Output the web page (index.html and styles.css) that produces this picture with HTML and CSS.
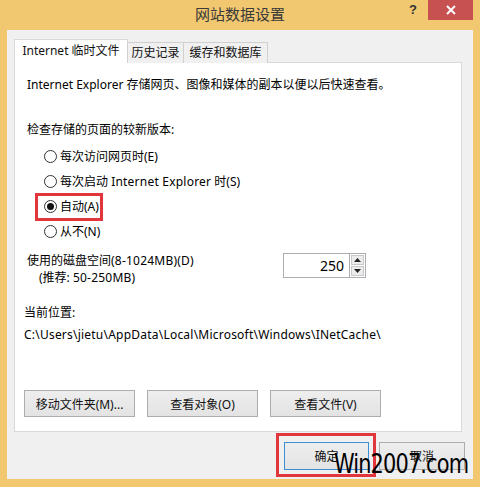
FILE: index.html
```html
<!DOCTYPE html>
<html lang="zh-CN">
<head>
<meta charset="utf-8">
<title>网站数据设置</title>
<link rel="stylesheet" href="styles.css">
</head>
<body>
<div class="window">
  <div class="titlebar">
    <div class="title-spacer"></div>
    <div class="title">网站数据设置</div>
    <div class="controls">
      <span class="help">?</span>
      <span class="close">
        <svg width="12" height="12" viewBox="0 0 12 12"><path d="M2 2 L10 10 M10 2 L2 10" stroke="#fff" stroke-width="2"/></svg>
      </span>
    </div>
  </div>
  <div class="client">
    <div class="tabs">
      <div class="tab active">Internet 临时文件</div>
      <div class="tab">历史记录</div>
      <div class="tab">缓存和数据库</div>
    </div>
    <div class="panel">
      <p class="intro">Internet Explorer 存储网页、图像和媒体的副本以便以后快速查看。</p>
      <p class="label">检查存储的页面的较新版本:</p>
      <div class="radios">
        <div class="radio-row"><span class="radio"></span><span>每次访问网页时(E)</span></div>
        <div class="radio-row"><span class="radio"></span><span>每次启动 <span class="latin">Internet Explorer</span> 时(S)</span></div>
        <div class="radio-row highlighted"><span class="radio checked"></span><span>自动(A)</span><span class="mark mark-auto"></span></div>
        <div class="radio-row"><span class="radio"></span><span>从不(N)</span></div>
      </div>
      <div class="disk">
        <div class="disk-text">
          <div>使用的磁盘空间<span class="latin">(8-1024MB)(D)</span></div>
          <div class="sub">(推荐: <span class="latin">50-250MB)</span></div>
        </div>
        <div class="spin">
          <div class="spin-field">250</div>
          <div class="spin-btns">
            <div class="spin-btn"><svg width="7" height="4" viewBox="0 0 7 4"><path d="M0 4 L3.5 0 L7 4 Z" fill="#222"/></svg></div>
            <div class="spin-btn"><svg width="7" height="4" viewBox="0 0 7 4"><path d="M0 0 L3.5 4 L7 0 Z" fill="#222"/></svg></div>
          </div>
        </div>
      </div>
      <p class="loc-label">当前位置:</p>
      <p class="path latin">C:\Users\jietu\AppData\Local\Microsoft\Windows\INetCache\</p>
      <div class="panel-buttons">
        <button class="btn wide">移动文件夹(M)...</button>
        <button class="btn wide">查看对象(O)</button>
        <button class="btn wide">查看文件(V)</button>
      </div>
    </div>
    <div class="footer">
      <button class="btn dlg default">确定<span class="mark mark-ok"></span></button>
      <button class="btn dlg">取消</button>
    </div>
  </div>
  <div class="watermark">Win2007.com</div>
</div>
</body>
</html>
```

FILE: styles.css
```css
* { box-sizing: border-box; }
html, body { margin: 0; padding: 0; }
body {
  width: 480px;
  height: 487px;
  overflow: hidden;
  font-family: "Noto Sans", "Noto Sans CJK SC", sans-serif;
  font-size: 12px;
  color: #000;
}
p { margin: 0; }
.latin { letter-spacing: 0.22px; }

.window {
  position: relative;
  width: 480px;
  height: 487px;
  background: #f1c86f;
  display: flex;
  flex-direction: column;
}

.titlebar {
  height: 30px;
  display: grid;
  grid-template-columns: 1fr auto 1fr;
  align-items: start;
}
.title {
  font-family: "Noto Sans CJK SC", sans-serif;
  font-size: 15px;
  line-height: 28px;
  color: #3a3a3a;
}
.controls {
  justify-self: end;
  display: flex;
  align-items: flex-start;
  margin-right: 7px;
}
.help {
  font-family: "Liberation Sans", sans-serif;
  font-weight: bold;
  font-size: 13px;
  line-height: 20px;
  color: #333;
  width: 30px;
  text-align: center;
}
.close {
  width: 45px;
  height: 20px;
  background: #c75050;
  display: flex;
  align-items: center;
  justify-content: center;
}

.client {
  flex: 1;
  margin: 0 7px 8px 7px;
  background: #f0f0f0;
  padding: 9px 11px 0 7px;
  display: flex;
  flex-direction: column;
}

.tabs {
  display: flex;
  align-items: flex-end;
  height: 24px;
  position: relative;
  z-index: 1;
}
.tab {
  height: 21px;
  line-height: 19px;
  border: 1px solid #d0d0d0;
  border-bottom: none;
  background: #f0f0f0;
  color: #111;
  margin-left: -1px;
  white-space: nowrap;
  text-align: center;
}
.tab:first-child { margin-left: 0; }
.tab.active {
  height: 24px;
  line-height: 22px;
  background: #fff;
  width: 114px;
  border-color: #d9d9d9;
}
.tab:nth-child(2) { width: 57px; }
.tab:nth-child(3) { width: 85px; }

.panel {
  background: #fff;
  border: 1px solid #d9d9d9;
  margin-top: -1px;
  padding: 14px 12px 14px 12px;
  line-height: 16px;
}
.label { margin-top: 29px; }

.radios { margin-top: 6px; padding-left: 17px; }
.radio-row {
  position: relative;
  height: 25px;
  display: flex;
  align-items: center;
  gap: 3px;
}
.radio {
  width: 13px;
  height: 13px;
  border: 1px solid #333;
  border-radius: 50%;
  background: #fff;
  display: flex;
  align-items: center;
  justify-content: center;
}
.radio.checked::after {
  content: "";
  width: 7px;
  height: 7px;
  border-radius: 50%;
  background: #111;
}

.mark {
  position: absolute;
  border: 3px solid #e0363c;
  pointer-events: none;
}
.mark-auto {
  left: -9px;
  top: -1px;
  width: 68px;
  height: 28px;
}

.disk {
  display: flex;
  justify-content: space-between;
  margin-top: 8px;
  padding-right: 83px;
  line-height: 17px;
}
.disk-text .sub { padding-left: 12px; }
.spin {
  display: flex;
  margin-top: 1px;
}
.spin-field {
  width: 67px;
  height: 25px;
  border: 1px solid #abadb3;
  text-align: right;
  padding-right: 5px;
  line-height: 23px;
  font-size: 14px;
}
.spin-btns {
  display: flex;
  flex-direction: column;
  width: 16px;
  height: 25px;
  border: 1px solid #abadb3;
  border-left: none;
  padding: 1px;
  gap: 1px;
}
.spin-btn {
  flex: 1;
  background: #ececec;
  border: 1px solid #c8c8c8;
  display: flex;
  align-items: center;
  justify-content: center;
}

.loc-label { margin-top: 19px; margin-left: -3px; }
.path { margin-top: 6px; margin-left: -3px; }

.panel-buttons {
  display: flex;
  gap: 12px;
  margin-top: 47px;
  margin-left: -3px;
}

.btn {
  font-family: "Noto Sans", "Noto Sans CJK SC", sans-serif;
  font-size: 12px;
  color: #111;
  background: linear-gradient(#eeeeee, #e3e3e3);
  border: 1px solid #adadad;
  padding: 0;
  margin: 0;
  position: relative;
}
.btn.wide { width: 111px; height: 27px; }

.footer {
  display: flex;
  justify-content: flex-end;
  gap: 10px;
  margin-top: 10px;
  margin-right: -3px;
}
.btn.dlg { width: 86px; height: 28px; }
.btn.default { border-color: #3c8fd6; width: 85px; }
.mark-ok {
  left: -9px;
  top: -10px;
  width: 100px;
  height: 44px;
}

.watermark {
  position: absolute;
  left: 334px;
  top: 448px;
  font-family: "DejaVu Sans Condensed", "DejaVu Sans", sans-serif;
  font-size: 27px;
  line-height: 32px;
  color: #000;
  letter-spacing: -1px;
  white-space: nowrap;
  transform: scaleX(0.86);
  transform-origin: left top;
}
```
